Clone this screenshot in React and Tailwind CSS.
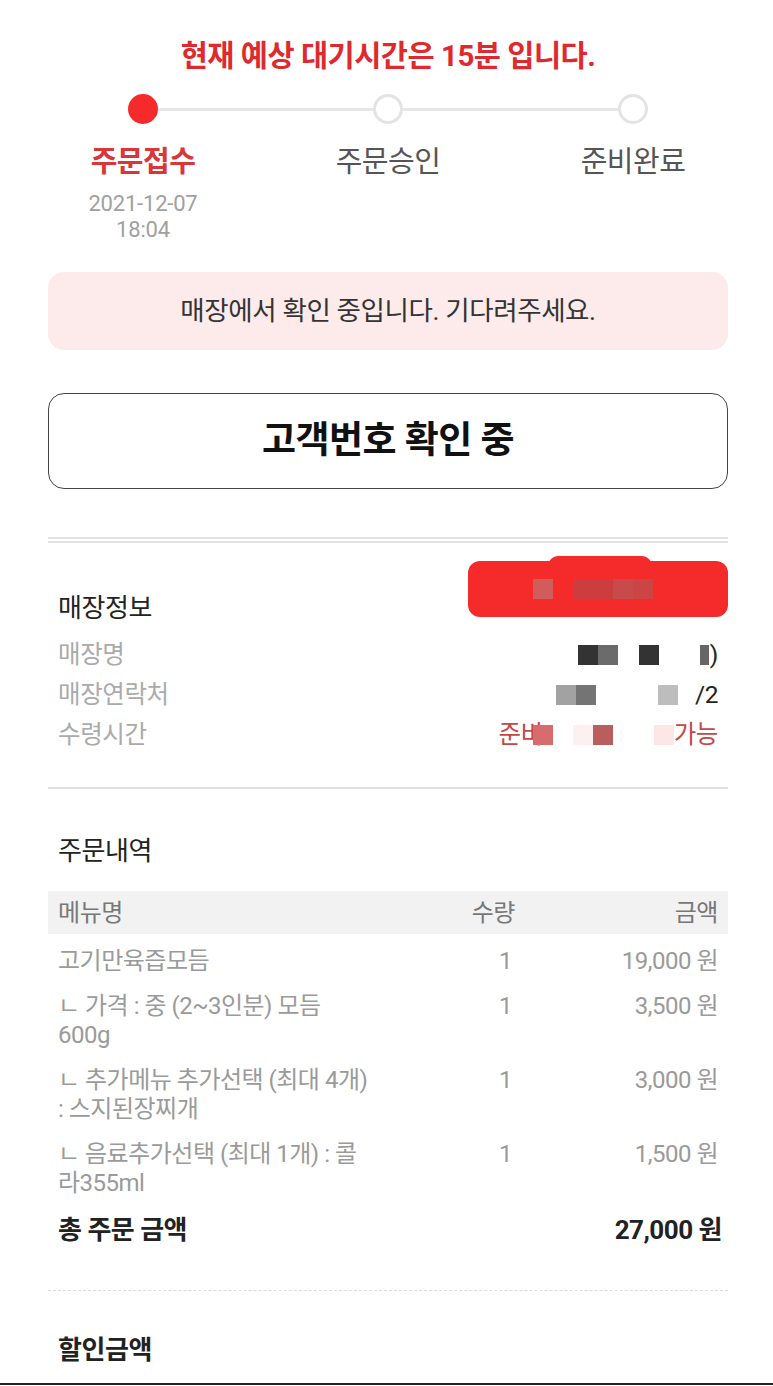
import React from 'react';

const font = { fontFamily: "Roboto, 'Noto Sans CJK KR', sans-serif" };

const steps = [
  { label: '주문접수', active: true, date: ['2021-12-07', '18:04'] },
  { label: '주문승인' },
  { label: '준비완료' },
];

const items = [
  { name: ['고기만육즙모듬'], qty: 1, price: '19,000 원' },
  { name: ['ㄴ 가격 : 중 (2~3인분) 모듬', '600g'], qty: 1, price: '3,500 원' },
  { name: ['ㄴ 추가메뉴 추가선택 (최대 4개)', ': 스지된장찌개'], qty: 1, price: '3,000 원' },
  { name: ['ㄴ 음료추가선택 (최대 1개) : 콜', '라355ml'], qty: 1, price: '1,500 원' },
];

function Block({ className }) {
  return <span className={`inline-block w-[20px] h-[20px] ${className}`} />;
}

export default function App() {
  return (
    <div className="w-[773px] bg-white" style={font}>
      <div className="pl-[48px] pr-[45px]">
        {/* wait time */}
        <p className="pt-[36px] text-center text-[29.5px] leading-[40px] font-bold text-[#e0292e] tracking-[-0.5px]">
          현재 예상 대기시간은 15분 입니다.
        </p>

        {/* progress */}
        <div className="mt-[18px] px-[80px] flex items-center">
          <span className="w-[30px] h-[30px] rounded-full bg-[#f52a2a] shrink-0" />
          <span className="flex-1 h-[3px] bg-[#e6e6e6]" />
          <span className="w-[30px] h-[30px] rounded-full border-[3px] border-[#e3e3e3] bg-white shrink-0" />
          <span className="flex-1 h-[3px] bg-[#e6e6e6]" />
          <span className="w-[30px] h-[30px] rounded-full border-[3px] border-[#e3e3e3] bg-white shrink-0" />
        </div>
        <div className="mt-[19px] flex justify-between">
          {steps.map((s) => (
            <div key={s.label} className="w-[190px] flex flex-col items-center">
              <span
                className={
                  s.active
                    ? 'text-[29px] leading-[38px] font-bold text-[#d9363a] tracking-[-0.5px]'
                    : 'text-[29px] leading-[38px] text-[#555] tracking-[-0.5px]'
                }
              >
                {s.label}
              </span>
              {s.date && (
                <div className="mt-[10px] text-center text-[22px] leading-[26px] text-[#a0a0a0] tracking-[-0.2px]">
                  <div>{s.date[0]}</div>
                  <div>{s.date[1]}</div>
                </div>
              )}
            </div>
          ))}
        </div>

        {/* notice */}
        <div className="mt-[29px] h-[78px] rounded-[16px] bg-[#fdeaea] flex items-center justify-center">
          <span className="text-[26.5px] text-[#333] tracking-[-0.4px]">매장에서 확인 중입니다. 기다려주세요.</span>
        </div>

        <div className="mt-[43px] h-[96px] rounded-[16px] border-[1.5px] border-[#444] flex items-center justify-center">
          <span className="text-[37px] font-bold text-[#111] tracking-[-0.5px]">고객번호 확인 중</span>
        </div>

        <div className="mt-[48px] h-[2px] bg-[#e2e2e2]" />
        <div className="mt-[2px] h-[2px] bg-[#e2e2e2]" />

        {/* store info */}
        <div className="mt-[13px] flex justify-between items-start">
          <h2 className="pl-[10px] pt-[36px] text-[26px] leading-[32px] text-[#222] tracking-[-0.4px]">매장정보</h2>
          <div className="relative w-[260px] h-[61px]">
            <span className="absolute left-[80px] right-[76px] top-0 h-[14px] rounded-t-[10px] bg-[#f52a2a]" />
            <div className="absolute inset-x-0 top-[5px] bottom-0 rounded-[12px] bg-[#f52a2a] flex items-center pl-[65px]">
              <Block className="bg-[#d05c5c]" />
              <span className="w-[20px]" />
              <Block className="bg-[#cc3d3d]" />
              <Block className="bg-[#cc3d3d]" />
              <Block className="bg-[#c84a4a]" />
              <Block className="bg-[#cc4545]" />
            </div>
          </div>
        </div>

        <div className="mt-[11px] px-[10px] text-[24.5px] leading-[40px] tracking-[-0.4px]">
          <div className="flex justify-between">
            <span className="text-[#aaa]">매장명</span>
            <span className="flex items-center text-[#222]">
              <Block className="bg-[#333]" />
              <Block className="bg-[#6b6b6b]" />
              <span className="w-[21px]" />
              <Block className="bg-[#333]" />
              <span className="w-[41px]" />
              <Block className="!w-[9px] bg-[#666]" />
              <span className="ml-[1px]">)</span>
            </span>
          </div>
          <div className="flex justify-between">
            <span className="text-[#aaa]">매장연락처</span>
            <span className="flex items-center text-[#222]">
              <Block className="bg-[#a2a2a2]" />
              <Block className="bg-[#747474]" />
              <span className="w-[62px]" />
              <Block className="bg-[#bdbdbd]" />
              <span className="ml-[17px]">/2</span>
            </span>
          </div>
          <div className="flex justify-between">
            <span className="text-[#aaa]">수령시간</span>
            <span className="flex items-center text-[#c4474a]">
              <span>준비</span>
              <Block className="-ml-[10px] bg-[#d76c6c]" />
              <span className="w-[20px]" />
              <Block className="bg-[#fdf0f0]" />
              <Block className="bg-[#b95d5d]" />
              <span className="w-[41px]" />
              <Block className="bg-[#fde6e6]" />
              <span>가능</span>
            </span>
          </div>
        </div>

        <div className="mt-[32px] h-[2px] bg-[#e0e0e0]" />

        {/* order */}
        <h2 className="mt-[46px] pl-[10px] text-[26px] leading-[32px] text-[#222] tracking-[-0.4px]">주문내역</h2>

        <div className="mt-[24px] h-[43px] bg-[#f2f2f2] px-[10px] grid grid-cols-[332px_125px_1fr] items-center text-[24px] text-[#777] tracking-[-0.4px]">
          <span>메뉴명</span>
          <span className="text-right">수량</span>
          <span className="text-right">금액</span>
        </div>

        <div className="mt-[5px] px-[10px]">
          {items.map((it) => (
            <div
              key={it.name[0]}
              className="grid grid-cols-[332px_125px_1fr] py-[8px] text-[24px] leading-[29px] text-[#9a9a9a] tracking-[-0.5px]"
            >
              <span className="whitespace-nowrap">
                {it.name.map((l) => (
                  <div key={l}>{l}</div>
                ))}
              </span>
              <span className="text-right pr-[3px]">{it.qty}</span>
              <span className="text-right">{it.price}</span>
            </div>
          ))}
        </div>

        <div className="mt-[8px] pl-[10px] pr-[6px] flex justify-between text-[26px] leading-[32px] font-bold text-[#222] tracking-[-0.5px]">
          <span>총 주문 금액</span>
          <span>27,000 원</span>
        </div>

        <div className="mt-[44px] border-t-[1.5px] border-dashed border-[#dcdcdc]" />

        <h2 className="mt-[43px] pl-[10px] text-[26px] leading-[32px] font-bold text-[#222] tracking-[-0.4px]">할인금액</h2>
      </div>
      <div className="mt-[17px] h-[2px] bg-[#222]" />
    </div>
  );
}
